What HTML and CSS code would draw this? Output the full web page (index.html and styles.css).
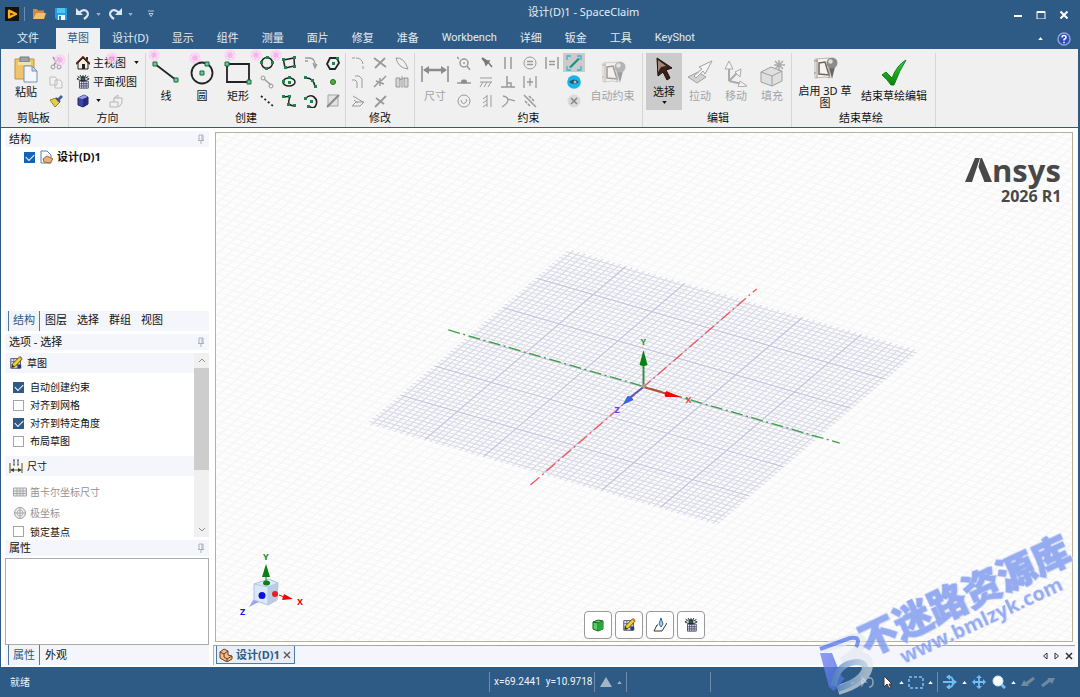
FILE: index.html
```html
<!DOCTYPE html>
<html lang="zh-CN">
<head>
<meta charset="utf-8">
<title>设计(D)1 - SpaceClaim</title>
<link rel="stylesheet" href="styles.css">
</head>
<body>
<svg class="defs" aria-hidden="true">
  <defs>
    <symbol id="down" viewBox="0 0 6 4"><path d="M0 0h6L3 4z" fill="currentColor"/></symbol>
    <symbol id="up" viewBox="0 0 6 4"><path d="M0 4h6L3 0z" fill="currentColor"/></symbol>
    <symbol id="pin" viewBox="0 0 8 10"><path d="M2 1h4v5M2 1v5M5 1v5M1 6.500h6M4 6.500V10" fill="none" stroke="#8d93a3"/></symbol>
    <symbol id="eyegrid" viewBox="0 0 16 16">
      <path d="M4 7h10v8H4z" fill="#fff" stroke="#3a3f66"/><path d="M4 10h10M4 12.500h10M6.500 7v8M9 7v8M11.500 7v8" stroke="#3a3f66"/>
      <path d="M1 4.500Q7.500-1 15 4.500Q8 9 1 4.500z" fill="#dfe9ea" stroke="#222"/><circle cx="8" cy="4.500" r="2.300" fill="#27666b" stroke="#111"/>
      <path d="M2 1l1 1.500M5 0v1.500M8 0v1M11 0v1.500M14 1l-1 1.500" stroke="#222"/>
    </symbol>
    <symbol id="sketch" viewBox="0 0 16 16">
      <path d="M2 3h11v11H2z" fill="#e9ebf4" stroke="#3e4366"/><path d="M2 6.500h11M2 10h11M5.500 3v11M9.500 3v11" stroke="#59608b"/><path d="M10 10h4v4h-4z" fill="#30386f"/>
      <path d="M3 13l1.500-4.500L12 1l3 2.500-7.500 8z" fill="#f3d322" stroke="#54440a"/><path d="M3 13l1-3 2 2z" fill="#222"/><path d="M11.500 1.500L14 4l1.500-1.500L13 0z" fill="#cf6f55"/>
    </symbol>
    <symbol id="spark" viewBox="0 0 12 12"><circle cx="6" cy="6" r="5.500" fill="#fcc4f2" opacity=".75"/><path d="M3 6h6M6 3v6M4 4l4 4M8 4L4 8" stroke="#f18bdc" opacity=".45"/><circle cx="6" cy="6" r="4" fill="none" stroke="#fff" stroke-dasharray="2 2" opacity=".8"/></symbol>
    <symbol id="plane3d" viewBox="0 0 28 28">
      <path d="M4 4l15-1v20l-5-1-10 1z" fill="#f5f3f0" stroke="#bdb7b3"/><path d="M8 8l6-1 4 13-10-1z" fill="none" stroke="#6d625c" stroke-width="1.500"/><path d="M3 6h4M5 18h-2M6 4v19M18 7v16" stroke="#9a8f88"/>
      <path d="M18 12l6 0-3 12z" fill="#666"/><circle cx="21" cy="8" r="5.500" fill="#8c8c8c"/><circle cx="19.500" cy="6.500" r="2.200" fill="#dedede"/>
    </symbol>
    <linearGradient id="tick" x1="0" y1="0" x2="0" y2="1"><stop offset="0" stop-color="#3bd53c"/><stop offset="1" stop-color="#07800c"/></linearGradient>
    <linearGradient id="stem" x1="0" y1="0" x2="1" y2="1"><stop offset="0" stop-color="#7c86f6"/><stop offset="1" stop-color="#3d6fd6"/></linearGradient>
    <linearGradient id="bowl" x1="0" y1="0" x2="1" y2="0"><stop offset="0" stop-color="#5f8ed0"/><stop offset="1" stop-color="#b9c9d8"/></linearGradient>
  </defs>
</svg>

<div class="window">
  <header class="titlebar">
    <div class="quick">
      <svg class="i14" viewBox="0 0 14 14"><path d="M0 0h14v14H0z" fill="#15120c"/><path d="M4 3.500l7 3.500-7 3.500z" fill="#4a2f05" stroke="#ffb21b" stroke-width="2.200" stroke-linejoin="round"/></svg>
      <span class="vline"></span>
      <button aria-label="打开"><svg class="i14" viewBox="0 0 14 14"><path d="M1 2h4l1 1.500h6V6H4l-3 6z" fill="#d7893b"/><path d="M4 6h10l-2 6H1z" fill="#f6bd6f"/></svg></button>
      <button aria-label="保存"><svg class="i14" viewBox="0 0 14 14"><path d="M1 1h12v12H3l-2-2z" fill="#1e9fe0"/><path d="M3 1h8v5H3z" fill="#53c4f2"/><path d="M4 8h7v5H4z" fill="#eef8fd"/><path d="M5 9h2v4H5z" fill="#2b7db4"/></svg></button>
      <button aria-label="撤销"><svg class="i16" viewBox="0 0 16 16"><path d="M4 7Q9 2 12 5.500T9 13" fill="none" stroke="#dce6ef" stroke-width="2.200"/><path d="M1 2v7h7z" fill="#dce6ef"/></svg></button>
      <svg class="tri dim"><use href="#down"/></svg>
      <button aria-label="重做"><svg class="i16" viewBox="0 0 16 16"><path d="M12 7Q7 2 4 5.500T7 13" fill="none" stroke="#dce6ef" stroke-width="2.200"/><path d="M15 2v7H8z" fill="#dce6ef"/></svg></button>
      <svg class="tri dim"><use href="#down"/></svg>
      <button class="more" aria-label="自定义"><svg class="i8" viewBox="0 0 8 8"><path d="M1 1h6M2 3.500h4L4 6.500z" fill="none" stroke="#b9cad9"/></svg></button>
    </div>
    <h1>设计(D)1 - SpaceClaim</h1>
    <div class="winctl">
      <button aria-label="最小化"><svg class="i10" viewBox="0 0 10 10"><path d="M1 7h8" stroke="#fff" stroke-width="2"/></svg></button>
      <button aria-label="最大化"><svg class="i10" viewBox="0 0 10 10"><path d="M1 2.500h8V10H1z" fill="none" stroke="#fff"/><path d="M1 3h8" stroke="#fff" stroke-width="2"/></svg></button>
      <button aria-label="关闭"><svg class="i10" viewBox="0 0 10 10"><path d="M1.500 2.500l7 7M8.500 2.500l-7 7" stroke="#fff" stroke-width="2"/></svg></button>
    </div>
  </header>

  <nav class="menu">
    <button class="file">文件</button><button class="active">草图</button><button>设计(D)</button><button>显示</button><button>组件</button><button>测量</button><button>面片</button><button>修复</button><button>准备</button><button class="latin">Workbench</button><button>详细</button><button>钣金</button><button>工具</button><button class="latin">KeyShot</button>
    <div class="menu-end">
      <svg class="tri light"><use href="#up"/></svg>
      <svg class="i14" viewBox="0 0 14 14"><circle cx="7" cy="7" r="6" fill="#2c49b8" stroke="#8fa3dc" stroke-width="1.500"/><path d="M5 5.500Q5 3.500 7 3.500T9 5.500Q9 6.500 7 7.500V8.500M7 9.700v1.500" fill="none" stroke="#fff" stroke-width="1.500"/></svg>
    </div>
  </nav>

  <section class="ribbon">
    <svg class="sparks" viewBox="0 0 300 20" aria-hidden="true">
      <use href="#spark" x="53" y="5" width="12" height="12"/><use href="#spark" x="105" y="3" width="12" height="12"/><use href="#spark" x="147" y="0" width="12" height="12"/><use href="#spark" x="188" y="3" width="12" height="12"/><use href="#spark" x="223" y="0" width="12" height="12"/><use href="#spark" x="249" y="0" width="12" height="12"/><use href="#spark" x="268" y="0" width="14" height="12"/>
    </svg>

    <div class="group g-clip">
      <div class="body">
        <button class="big high"><svg class="i28" viewBox="0 0 28 28"><path d="M3 4h19v20H3z" fill="#edc56c" stroke="#c39337"/><path d="M8 2h9v5H8z" fill="#9aa4ad" stroke="#717b84"/><path d="M6 7h13v3H6z" fill="#f6e1ac"/><path d="M12 11h8l5 5v11H12z" fill="#f3f7fd" stroke="#7c8fae"/><path d="M20 11v5h5z" fill="#cbd8eb" stroke="#7c8fae"/></svg>粘贴</button>
        <div class="tools one">
          <button aria-label="剪切"><svg class="i14" viewBox="0 0 14 14"><path d="M4 1l5 8M10 1L5 9" stroke="#999" stroke-width="1.500"/><circle cx="4" cy="11" r="2" fill="none" stroke="#999"/><circle cx="10" cy="11" r="2" fill="none" stroke="#999"/></svg></button>
          <button aria-label="复制"><svg class="i14" viewBox="0 0 14 14"><path d="M1 2h5l2 2v6H1zM6 5h5l2 2v6H6z" fill="#f2f2f2" stroke="#bdbdbd"/></svg></button>
          <button aria-label="格式刷"><svg class="i14" viewBox="0 0 14 14"><path d="M8 5l4-4 2 2-4 4z" fill="#4d5aa8"/><path d="M1 6l6-2 4 4-5 5z" fill="#e8ce46" stroke="#9a851f"/><path d="M7 4l4 4" stroke="#475082" stroke-width="2"/></svg></button>
        </div>
      </div>
      <h2>剪贴板</h2>
    </div>

    <div class="group g-view">
      <div class="body rows">
        <button><svg class="i14" viewBox="0 0 14 14"><path d="M2 7l5-5 5 5v6H2z" fill="#f5efdc" stroke="#222"/><path d="M0 8l7-7 7 7" fill="none" stroke="#4a2113" stroke-width="1.800"/><path d="M6 8h3v5H6z" fill="#222"/><path d="M10 1h2v3h-2z" fill="#333"/></svg>主视图<svg class="tri push"><use href="#down"/></svg></button>
        <button><svg class="i14"><use href="#eyegrid"/></svg>平面视图</button>
        <div class="row">
          <button aria-label="定向"><svg class="i14" viewBox="0 0 14 14"><path d="M2 4l6-3 4 2v7l-5 3-5-2z" fill="#3c45a5" stroke="#24286b"/><path d="M2 4l6-3 4 2-5 2z" fill="#98a0e2"/><path d="M7 5l5-2v7l-5 3z" fill="#262d7b"/></svg><svg class="tri"><use href="#down"/></svg></button>
          <button aria-label="旋转视图"><svg class="i14" viewBox="0 0 14 14"><path d="M1 8h8v5H1zM5 8V4l4-3v3h4v5l-3 4M5 4h4" fill="none" stroke="#b5b5b5"/></svg></button>
        </div>
      </div>
      <h2>方向</h2>
    </div>

    <div class="group g-create">
      <div class="body">
        <button class="big"><svg class="i28" viewBox="0 0 28 28"><path d="M3 5l21 16" stroke="#222" stroke-width="1.800"/><g fill="#74c69b" stroke="#176b3d"><path d="M1 3h4v4H1zM22 19h4v4h-4z"/></g></svg>线</button>
        <button class="big"><svg class="i28" viewBox="0 0 28 28"><circle cx="14" cy="14" r="10.500" fill="none" stroke="#222" stroke-width="1.800"/><g fill="#74c69b" stroke="#176b3d"><path d="M12 12h4v4h-4zM17 3h4v4h-4z"/></g></svg>圆</button>
        <button class="big"><svg class="i28" viewBox="0 0 28 28"><path d="M3 5h22v18H3z" fill="none" stroke="#222" stroke-width="1.800"/><g fill="#74c69b" stroke="#176b3d"><path d="M1 3h4v4H1zM23 21h4v4h-4z"/></g></svg>矩形</button>
        <div class="tools four">
          <button aria-label="三点圆"><svg class="i14" viewBox="0 0 14 14"><circle cx="7" cy="7" r="5.500" fill="none" stroke="#222" stroke-width="1.500"/><g fill="#21824c"><path d="M6 0h3v3H6zM0 5h3v3H0zM11 5h3v3h-3zM5 11h3v3H5z"/></g></svg></button>
          <button aria-label="三点矩形"><svg class="i14" viewBox="0 0 14 14"><path d="M1.500 4L12 2l.5 8L3 12z" fill="none" stroke="#222" stroke-width="1.500"/><g fill="#21824c"><path d="M0 2h3v3H0zM11 0h3v3h-3zM2 10h3v3H2zM11 9h3v3h-3z"/></g></svg></button>
          <button aria-label="切线弧"><svg class="i14" viewBox="0 0 14 14"><path d="M1 2h4Q12 2 11 12M1 5h3M9 7l2 5 2-4" fill="none" stroke="#9a9a9a" stroke-width="1.300"/></svg></button>
          <button aria-label="多边形"><svg class="i14" viewBox="0 0 14 14"><path d="M4 2h7l2 5-4 6H4L1 8z" fill="none" stroke="#222" stroke-width="1.800"/><path d="M6 6h3v3H6zM10 1h3v3h-3z" fill="#21824c"/></svg></button>
          <button aria-label="切线"><svg class="i14" viewBox="0 0 14 14"><path d="M4 4l7 6" stroke="#999" stroke-width="1.500"/><circle cx="3" cy="3" r="2" fill="none" stroke="#999"/><circle cx="11" cy="11" r="2" fill="none" stroke="#999"/></svg></button>
          <button aria-label="椭圆"><svg class="i14" viewBox="0 0 14 14"><ellipse cx="7" cy="7" rx="6" ry="4" fill="none" stroke="#222" stroke-width="1.500"/><path d="M6 6h3v3H6zM6 1h3v3H6zM0 5h3v3H0z" fill="#21824c"/></svg></button>
          <button aria-label="圆弧"><svg class="i14" viewBox="0 0 14 14"><path d="M2 3q8 0 9 9" fill="none" stroke="#222" stroke-width="1.500"/><path d="M0 1h3v3H0zM7 4h3v3H7zM10 10h3v3h-3z" fill="#21824c"/></svg></button>
          <button aria-label="点"><svg class="i14" viewBox="0 0 14 14"><circle cx="7" cy="7" r="2.500" fill="#58ab45" stroke="#236b25"/></svg></button>
          <button aria-label="构造线"><svg class="i14" viewBox="0 0 14 14"><path d="M1 2l12 10" stroke="#222" stroke-width="1.800" stroke-dasharray="2 2.500"/></svg></button>
          <button aria-label="样条曲线"><svg class="i14" viewBox="0 0 14 14"><path d="M2 3Q9 1 7 6T12 12" fill="none" stroke="#222" stroke-width="1.500"/><path d="M0 1h3v3H0zM6 1h3v3H6zM5 9h3v3H5zM11 10h3v3h-3z" fill="#21824c"/></svg></button>
          <button aria-label="扫掠弧"><svg class="i14" viewBox="0 0 14 14"><path d="M2 4q4-4 8-1t2 8-7 1" fill="none" stroke="#222" stroke-width="1.600"/><path d="M0 3h3v3H0zM6 6h3v3H6zM3 11h3v3H3z" fill="#21824c"/></svg></button>
          <button aria-label="面曲线"><svg class="i14" viewBox="0 0 14 14"><path d="M2 1h10v11H2z" fill="#e2e2e2" stroke="#a5a5a5"/><path d="M1 13L13 1" stroke="#8a8a8a" stroke-width="2"/></svg></button>
        </div>
      </div>
      <h2>创建</h2>
    </div>

    <div class="group g-modify">
      <div class="body">
        <div class="tools three gray">
          <button aria-label="圆角"><svg class="i14" viewBox="0 0 14 14"><path d="M1 2h3M5 2q6 0 7 6M12 10v3" fill="none"/></svg></button>
          <button aria-label="剪掉"><svg class="i14" viewBox="0 0 14 14"><path d="M1 2l12 9M12 2L2 12" fill="none" stroke-width="1.800"/></svg></button>
          <button aria-label="偏移圆弧"><svg class="i14" viewBox="0 0 14 14"><path d="M1 2q8-1 12 11Q3 12 1 2z" fill="none"/></svg></button>
          <button aria-label="偏移"><svg class="i14" viewBox="0 0 14 14"><path d="M1 5h3l2 2v6M4 1h4l3 3v9" fill="none"/></svg></button>
          <button aria-label="分割"><svg class="i14" viewBox="0 0 14 14"><path d="M1 12l5-5M8 6l5-5M3 6l8 3M7 3v8" fill="none" stroke-width="1.500"/></svg></button>
          <button aria-label="镜像"><svg class="i14" viewBox="0 0 14 14"><path d="M1 3h4v9H1zM9 3h4v9H9zM7 1v12M4 5l6-2" fill="#d5d5d5"/></svg></button>
          <button aria-label="投影"><svg class="i14" viewBox="0 0 14 14"><path d="M2 2l10 6M1 12h8l4-4H5zM3 6l4 3" fill="none"/></svg></button>
          <button aria-label="延伸"><svg class="i14" viewBox="0 0 14 14"><path d="M2 13L13 2M3 4l8 6" fill="none" stroke-width="1.800"/></svg></button>
        </div>
      </div>
      <h2>修改</h2>
    </div>

    <div class="group g-constrain">
      <div class="body">
        <button class="big off"><svg class="i28" viewBox="0 0 28 28"><path d="M1 7v16M27 7v16" stroke="#8b8b8b" stroke-width="1.500"/><path d="M4 11h20" stroke="#8b8b8b" stroke-width="2.500"/><path d="M2 11l6-4v8zM26 11l-6-4v8z" fill="#8b8b8b"/></svg>尺寸</button>
        <div class="tools five gray">
          <button aria-label="检查"><svg class="i14" viewBox="0 0 14 14"><circle cx="7" cy="7" r="4" fill="none" stroke-width="1.500"/><path d="M10 10l3 4M6 7h2M0 1l2 2" stroke-width="1.500"/></svg></button>
          <button aria-label="固定"><svg class="i14" viewBox="0 0 14 14"><path d="M3 2l5 3 2 0-3 4-1-3z" fill="#777" stroke="#777" stroke-width="1.500"/><path d="M9 6l4 5" stroke="#777" stroke-width="1.500"/></svg></button>
          <button aria-label="平行"><svg class="i14" viewBox="0 0 14 14"><path d="M4 1v12M10 1v12" stroke-width="1.500"/></svg></button>
          <button aria-label="等半径"><svg class="i14" viewBox="0 0 14 14"><circle cx="7" cy="7" r="6" fill="none"/><path d="M4 5.500h6M4 8.500h6" stroke-width="1.500"/></svg></button>
          <button aria-label="等距"><svg class="i14" viewBox="0 0 14 14"><path d="M1 1v12M13 1v12M4 5.500h6M4 8.500h6" stroke-width="1.500"/></svg></button>
          <button aria-label="重合"><svg class="i14" viewBox="0 0 14 14"><path d="M0 8h14" stroke-width="1.500"/><path d="M4 8l1-3h4l1 3z" fill="#888"/></svg></button>
          <button aria-label="水平"><svg class="i14" viewBox="0 0 14 14"><path d="M1 3h12M1 7h12M4 7l-3 5M8 7l-3 5M12 7l-3 5" fill="none"/></svg></button>
          <button aria-label="垂直"><svg class="i14" viewBox="0 0 14 14"><path d="M6 1v11M0 12h14M6 8h4v4" fill="none" stroke-width="1.500"/></svg></button>
          <button aria-label="中点"><svg class="i14" viewBox="0 0 14 14"><path d="M1 1v12M13 1v12M7 3v8M4 7h6" stroke-width="1.300"/></svg></button>
          <span></span>
          <button aria-label="同心"><svg class="i14" viewBox="0 0 14 14"><circle cx="7" cy="7" r="6" fill="none"/><path d="M4 6q1 5 4 3t1-4" fill="none"/></svg></button>
          <button aria-label="竖直"><svg class="i14" viewBox="0 0 14 14"><path d="M8 1v12M12 1v12M8 2L4 5M8 6L4 9M8 10l-4 3" fill="none"/></svg></button>
          <button aria-label="相切"><svg class="i14" viewBox="0 0 14 14"><path d="M2 2q5 1 5 4t-6 7M7 5l7 2" fill="none" stroke-width="1.300"/></svg></button>
          <button aria-label="对称"><svg class="i14" viewBox="0 0 14 14"><path d="M1 1l12 12" stroke-width="1.500"/><path d="M6 2l5 5M2 7l5 5" stroke-width="1.500" stroke-dasharray="3 1"/></svg></button>
        </div>
        <div class="tools one wide">
          <button class="pressed" aria-label="显示约束"><svg class="i16" viewBox="0 0 16 16"><path d="M1 5V1h4M11 1h4v4M15 11v4h-4M5 15H1v-4" fill="none" stroke="#30b9d4" stroke-width="1.300"/><path d="M3 12l9-9 2 1-9 9z" fill="#168f84"/></svg></button>
          <button aria-label="约束可见性"><svg class="i14" viewBox="0 0 14 14"><circle cx="7" cy="7" r="6.800" fill="#16b3ee"/><path d="M2 7q5-5 10 0-5 4-10 0z" fill="#31505e"/><circle cx="8" cy="7" r="1.500" fill="#9fc2d0"/></svg></button>
          <button aria-label="删除约束"><svg class="i14" viewBox="0 0 14 14"><circle cx="7" cy="7" r="6.500" fill="#dadada"/><path d="M4 4l6 6M10 4l-6 6" stroke="#858585" stroke-width="1.500"/></svg></button>
        </div>
        <button class="big off auto"><svg class="i28"><use href="#plane3d" opacity=".6"/></svg>自动约束</button>
      </div>
      <h2>约束</h2>
    </div>

    <div class="group g-edit">
      <div class="body">
        <button class="big high pressed"><svg class="i28" viewBox="0 0 28 28"><path d="M7 3l15 10-6 2 4 8-3 2-4-8-5 4z" fill="#3c2117" stroke="#1b100b"/><path d="M8 5l8 6-5 1-3 5z" fill="#a3887a"/></svg>选择<svg class="tri"><use href="#down"/></svg></button>
        <button class="big off"><svg class="i28" viewBox="0 0 28 28"><path d="M2 18l10-5 8 5-9 6z" fill="#d2d2d2" stroke="#a3a3a3"/><path d="M8 17l8-7-3-2L26 2l-7 13-2-3-7 7z" fill="#f5f5f5" stroke="#a3a3a3"/></svg>拉动</button>
        <button class="big off"><svg class="i28" viewBox="0 0 28 28"><path d="M7 22V8M7 22l9-9M7 22l13 3" stroke="#ababab" stroke-width="2"/><path d="M7 2l4 8H3zM19 10l-1 8-5-5zM25 27l-9 1 2-6z" fill="#f5f5f5" stroke="#ababab"/></svg>移动</button>
        <button class="big off"><svg class="i28" viewBox="0 0 28 28"><path d="M3 13l10-5 11 4v10l-10 5-11-4z" fill="#dfdfdf" stroke="#9f9f9f"/><path d="M3 13l11 4 10-5M14 17v10" fill="none" stroke="#9f9f9f"/><path d="M21 1v11M16 6h11M17 2l8 8M25 2l-8 8" stroke="#aaa" stroke-width="1.500"/></svg>填充</button>
      </div>
      <h2>编辑</h2>
    </div>

    <div class="group g-end">
      <div class="body">
        <button class="big high wide3d"><svg class="i28"><use href="#plane3d"/></svg>启用 3D 草图</button>
        <button class="big finish"><svg class="i28" viewBox="0 0 28 28"><path d="M2 16l4-3 6 6Q17 6 26 1 19 12 14 26h-3Q7 20 2 16z" fill="url(#tick)" stroke="#138017"/></svg>结束草绘编辑</button>
      </div>
      <h2>结束草绘</h2>
    </div>
  </section>

  <main class="workspace">
    <aside class="side">
      <section class="tree">
        <h3>结构<svg class="pin"><use href="#pin"/></svg></h3>
        <label class="node"><input type="checkbox" class="bright" checked>
          <svg class="i14" viewBox="0 0 14 14"><path d="M2 1h6l4 4v8H2z" fill="#fafcff" stroke="#5f7fa6"/><path d="M4 9l4-3 6 3-3 4-6-1z" fill="#e9b07c" stroke="#a5673a"/></svg>
          <b>设计(D)1</b></label>
      </section>
      <div class="tabs upper"><button class="on">结构</button><button>图层</button><button>选择</button><button>群组</button><button>视图</button></div>

      <section class="options">
        <h3>选项 - 选择<svg class="pin"><use href="#pin"/></svg></h3>
        <div class="scroller">
          <div class="list">
            <h4><svg class="i14"><use href="#sketch"/></svg>草图</h4>
            <div class="checks">
              <label><input type="checkbox" checked>自动创建约束</label>
              <label><input type="checkbox">对齐到网格</label>
              <label><input type="checkbox" checked>对齐到特定角度</label>
              <label><input type="checkbox">布局草图</label>
            </div>
            <h4><svg class="i14" viewBox="0 0 14 14"><path d="M1 4v10M13 4v10" stroke="#7b7c32" stroke-width="1.300"/><path d="M2 11h10" stroke="#5c5d20"/><path d="M1 11l4-2v4zM13 11L9 9v4z" fill="#3e4014"/><path d="M4 1h2M4 6h2M5 1v5M8 1h2M8 6h2M9 1v5" stroke="#555"/></svg>尺寸</h4>
            <div class="dims">
              <button disabled><svg class="i14" viewBox="0 0 14 14"><path d="M.5 3h13v8H.5zM.5 6h13M.5 8.500h13M4 3v8M7 3v8M10 3v8" fill="#e8e8e8" stroke="#a8a8a8"/></svg>笛卡尔坐标尺寸</button>
              <button disabled><svg class="i14" viewBox="0 0 14 14"><circle cx="7" cy="7" r="5.500" fill="#eee" stroke="#a0a0a0"/><circle cx="7" cy="7" r="3" fill="none" stroke="#b8b8b8"/><path d="M1 7h12M7 1v12" stroke="#a8a8a8"/></svg>极坐标</button>
              <label><input type="checkbox">锁定基点</label>
            </div>
          </div>
          <div class="scrollbar">
            <svg class="i10" viewBox="0 0 10 10"><path d="M2 7l3-3 3 3" fill="none" stroke="#8d8d8d"/></svg>
            <span class="thumb"></span>
            <svg class="i10" viewBox="0 0 10 10"><path d="M2 3l3 3 3-3" fill="none" stroke="#8d8d8d"/></svg>
          </div>
        </div>
      </section>

      <section class="props">
        <h3>属性<svg class="pin"><use href="#pin"/></svg></h3>
        <div class="propbox"></div>
      </section>
      <div class="tabs"><button class="on">属性</button><button>外观</button></div>
    </aside>

    <div class="document">
      <div class="viewport">
        <svg class="scene" viewBox="217 134 855 508" preserveAspectRatio="xMidYMid slice">
          <rect x="0" y="0" width="1300" height="900" fill="#fdfdfd"/>
          <g transform="matrix(5.880 1.700 -3.390 2.920 643.500 388)">
            <g stroke="#f6f6f7" stroke-width="400">
              <path d="M-200 0H200" stroke-dasharray=".3 1.200"/>
              <path d="M0-200V200" stroke-dasharray=".3 1.200"/>
            </g>
            <g stroke="#dadae8" stroke-width="59.600">
              <path d="M-29.100 0H29.200" stroke-dasharray=".22 .78"/>
              <path d="M0-29.100V29.200" stroke-dasharray=".28 .72"/>
            </g>
            <g stroke="#c3c3e2" stroke-width="59">
              <path d="M-20.100 0H21" stroke-dasharray=".2 9.800"/>
              <path d="M0-20.100V21" stroke-dasharray=".25 9.750"/>
            </g>
          </g>
          <g fill="none" stroke-width="1.300" stroke-dasharray="12 3.500 2 3.500">
            <path d="M449 331L840 444" stroke="#3d9f42"/><path d="M531 486L757 290" stroke="#f35b5b"/>
          </g>
          <path d="M644 388V365" stroke="#3a8c4c" stroke-width="2"/><path d="M644 351l4 15q-4 2-8 0z" fill="#078111"/>
          <path d="M644 388l24 7" stroke="#b9503d" stroke-width="2"/><path d="M681 398l-15 0q-2-3 1-6z" fill="#f10505"/>
          <path d="M644 388l-14 11" stroke="#5e55b5" stroke-width="2"/><path d="M623 406l5-9q4 0 6 4z" fill="#3867dc"/>
          <circle cx="644" cy="387" r="2" fill="#b59a8f"/>
          <g class="axis"><text x="641" y="346" fill="#379143">Y</text><text x="686" y="404" fill="#df4943">X</text><text x="615" y="414" fill="#5a4be5">Z</text></g>
        </svg>

        <svg class="brand" viewBox="964 154 100 54">
          <path d="M966 183l10-24h5l-8 24zM981.500 159h1.500l10 24h-7.500l-6-15z" fill="#484848"/>
          <text class="brand-name" x="993" y="183">nsys</text>
          <text class="brand-ver" x="1002" y="203">2026 R1</text>
        </svg>

        <svg class="triad" viewBox="238 550 68 68">
          <path d="M254 584l15-5 9 4-1 17-9 5-14-5z" fill="#dce8f7" stroke="#adc3de"/><path d="M254 584l14 3 10-4M268 587v18" fill="none" stroke="#b3c9e3"/><path d="M268 587l10-4-1 17-9 5z" fill="#b8cce5"/>
          <path d="M266 582v-7" stroke="#078111"/><path d="M266 564l4 13h-8z" fill="#078111"/><ellipse cx="266.500" cy="583" rx="3.500" ry="2.500" fill="#078111"/>
          <path d="M293 599l-11 1 2-6z" fill="#f10505"/><path d="M279 595l5 2" stroke="#f10505"/><circle cx="275" cy="594" r="3" fill="#ee1b22"/>
          <circle cx="262" cy="595.500" r="3.500" fill="#0910dc"/><path d="M249 607l4-7 6 2z" fill="#9ca3f0"/>
          <g class="axis"><text x="263" y="560" fill="#0b8c18">Y</text><text x="297" y="605" fill="#f10505">X</text><text x="240" y="615" fill="#1717e8">Z</text></g>
        </svg>

        <div class="modes">
          <button aria-label="三维模式"><svg class="i14" viewBox="0 0 14 14"><path d="M2 4l5-2 5 1v8l-5 2-5-2z" fill="#55cf66" stroke="#175f22"/><path d="M2 4l5 1 5-2M7 5v8" fill="none" stroke="#175f22"/><path d="M7 5l5-2v8l-5 2z" fill="#2ca43f"/></svg></button>
          <button aria-label="草图模式"><svg class="i14"><use href="#sketch"/></svg></button>
          <button aria-label="剖面模式"><svg class="i14" viewBox="0 0 14 14"><path d="M5 7H4L1 13h8l5-8" fill="none" stroke="#333"/><path d="M8 0l2 6-2 3-2-3z" fill="#9dccef" stroke="#316a9b"/></svg></button>
          <button aria-label="平面视图"><svg class="i14"><use href="#eyegrid"/></svg></button>
        </div>
      </div>

      <div class="docbar">
        <button class="doctab"><svg class="i14" viewBox="0 0 14 14"><path d="M1 4l4-3 4 2v4l4 1v3l-5 3-7-4z" fill="#edbd90" stroke="#6d3d1e"/><path d="M1 4l4 2 4-3M5 6v3l3 2 5-3M8 11v3" fill="none" stroke="#6d3d1e"/></svg><b>设计(D)1</b><svg class="i8" viewBox="0 0 8 8"><path d="M1 1l6 6M7 1L1 7" stroke="#555" stroke-width="1.300"/></svg></button>
        <div class="docnav">
          <button aria-label="上一个"><svg class="i8" viewBox="0 0 8 8"><path d="M6 1v6L2.500 4z" fill="none" stroke="#333"/></svg></button>
          <button aria-label="下一个"><svg class="i8" viewBox="0 0 8 8"><path d="M2 1v6l3.500-3z" fill="none" stroke="#333"/></svg></button>
          <button aria-label="关闭"><svg class="i8" viewBox="0 0 8 8"><path d="M1 1l6 6M7 1L1 7" stroke="#333" stroke-width="1.500"/></svg></button>
        </div>
      </div>
    </div>
  </main>

  <footer class="status">
    <span class="ready">就绪</span>
    <span class="coords"><span>x=69.2441</span><span>y=10.9718</span></span>
    <span class="warn"><svg class="i14" viewBox="0 0 14 14"><path d="M7 2l6 10H1z" fill="#a7b4c4"/></svg><svg class="tri dim"><use href="#up"/></svg></span>
    <span class="blank"></span>
    <div class="viewtools">
      <svg class="tri dim"><use href="#up"/></svg>
      <button aria-label="恢复"><svg class="i14" viewBox="0 0 14 14"><path d="M2 2l4 5H4l-2 3zM8 3q5-1 5 4t-4 5" fill="none" stroke="#8fa5b8" stroke-width="1.500"/></svg></button>
      <button aria-label="选择"><svg class="i14" viewBox="0 0 14 14"><path d="M4 1l8 8-3 0 2 4-2 0-2-4-3 3z" fill="#fff" stroke="#40372f"/></svg></button>
      <svg class="tri light"><use href="#up"/></svg>
      <button aria-label="框选"><svg class="i16" viewBox="0 0 16 16"><path d="M1 3h14v11H1z" fill="none" stroke="#7cc3f8" stroke-width="1.500" stroke-dasharray="3 2"/></svg></button>
      <svg class="tri light"><use href="#up"/></svg>
      <span class="vline tall"></span>
      <button aria-label="旋转"><svg class="i14" viewBox="0 0 14 14"><path d="M0 7h12M5 2q5-1 5 5t-5 5" fill="none" stroke="#70bdf7" stroke-width="1.800"/><path d="M14 7l-4-3v6zM3 2l4-3v6zM3 12l4-3v6z" fill="#70bdf7"/></svg></button>
      <svg class="tri light"><use href="#up"/></svg>
      <button aria-label="平移"><svg class="i14" viewBox="0 0 14 14"><path d="M1 7h12M7 1v12" stroke="#70bdf7" stroke-width="1.800"/><path d="M7 0l3 3H4zM7 14l3-3H4zM0 7l3-3v6zM14 7l-3-3v6z" fill="#70bdf7"/></svg></button>
      <button aria-label="缩放"><svg class="i14" viewBox="0 0 14 14"><path d="M9 9l4 4" stroke="#70bdf7" stroke-width="3"/><circle cx="6" cy="6" r="5" fill="#fff" stroke="#c9e8ff"/></svg></button>
      <svg class="tri light"><use href="#up"/></svg>
      <button aria-label="上一视图"><svg class="i14" viewBox="0 0 14 14"><path d="M13 3L5 9" stroke="#71899f" stroke-width="3"/><path d="M0 11l3-6 5 6z" fill="#71899f"/></svg></button>
      <button aria-label="下一视图"><svg class="i14" viewBox="0 0 14 14"><path d="M1 11l8-6" stroke="#71899f" stroke-width="3"/><path d="M14 3l-3 6-5-6z" fill="#71899f"/></svg></button>
    </div>
  </footer>

  <svg class="watermark" viewBox="815 530 265 167">
    <g fill="none" stroke="#e4e8ef" stroke-width="10" opacity=".8"><path d="M822 649L850 639Q864 635 860 646Q854 656 842 662Q868 650 868 666Q866 682 838 690"/></g>
    <path d="M820 653h12l6 15q3 10 7 10l-11 13-5-4z" fill="url(#stem)"/>
    <path d="M820 649L850 638Q862 636 856 647" fill="none" stroke="#5c7cf0" stroke-width="4"/>
    <path d="M834 686Q836 664 856 662Q868 662 864 672Q858 682 838 689" fill="none" stroke="url(#bowl)" stroke-width="6"/>
    <text class="wm-name" transform="translate(867 656) rotate(-25)">不迷路资源库</text>
    <text class="wm-url" transform="translate(904 664) rotate(-25)">www.bmlzyk.com</text>
  </svg>
</div>
</body>
</html>
```

FILE: styles.css
```css
* { box-sizing: border-box; }
html, body { height: 100%; margin: 0; }
body {
  font: 11px/14px "Noto Sans", "Noto Sans CJK SC", sans-serif;
  color: #111;
}
button {
  display: flex;
  align-items: center;
  justify-content: center;
  margin: 0;
  padding: 0;
  border: 0;
  background: none;
  color: inherit;
  font: inherit;
}
h1, h2, h3, h4 { margin: 0; font: inherit; }
svg { display: block; flex: none; }
.defs { position: absolute; width: 0; height: 0; }
.i8 { width: 8px; height: 8px; }
.i10 { width: 10px; height: 10px; }
.i14 { width: 14px; height: 14px; }
.i16 { width: 16px; height: 16px; }
.i28 { width: 28px; height: 28px; }
.tri { width: 5px; height: 3px; }
.dim { color: #9fb2c4; }
.light { color: #fff; }
.vline { width: 1px; height: 14px; background: #6f8dab; }
.vline.tall { height: 20px; }

.window {
  position: relative;
  display: flex;
  flex-direction: column;
  height: 100vh;
  padding: 0 2px 0 1px;
  overflow: hidden;
  background: #2d5b85;
}

.titlebar {
  display: grid;
  grid-template-columns: 1fr auto 1fr;
  align-items: center;
  height: 28px;
  color: #e6edf4;
}
.quick { display: flex; align-items: center; gap: 5px; padding-left: 4px; }
.quick button { width: 17px; }
.quick .more { margin-left: 4px; }
.titlebar h1 { padding: 0 0 4px 88px; }
.winctl { display: flex; justify-content: flex-end; gap: 13px; padding-right: 9px; }

.menu { display: flex; gap: 1px; height: 21px; color: #e3ebf2; }
.menu button { padding: 0 11px 2px; }
.menu .file { padding: 0 16px 2px; }
.menu .latin { font-family: Roboto, sans-serif; }
.menu .active { background: #f0f0f0; color: #2d5b85; }
.menu-end { display: flex; align-items: center; gap: 14px; margin-left: auto; padding-right: 7px; }

.ribbon {
  position: relative;
  display: flex;
  height: 78px;
  padding-top: 4px;
  background: #f0f0f0;
}
.sparks { position: absolute; top: 0; left: 0; width: 300px; height: 20px; pointer-events: none; }
.group { display: flex; flex-direction: column; border-right: 1px solid #d6d6d6; }
.group h2 { padding-top: 1px; text-align: center; }
.body { display: flex; height: 57px; }
.big {
  flex-direction: column;
  justify-content: flex-start;
  gap: 2px;
  width: 36px;
  padding-top: 6px;
}
.big.high { padding-top: 2px; }
.big.off { color: #a3a3a3; }
.pressed { background: #cbcbcb; }
.tools { display: grid; grid-auto-rows: 19px; }
.one { grid-template-columns: 15px; }
.one.wide { grid-template-columns: 22px; }
.three { grid-template-columns: repeat(3, 22px); }
.four { grid-template-columns: repeat(4, 22px); }
.five { grid-template-columns: repeat(5, 22px); }
.gray svg { stroke: #999; }
.g-clip { padding: 0 5px 0 3px; }
.g-clip .big { width: 44px; }
.g-view { width: 77px; padding: 0 6px 0 7px; }
.rows { flex-direction: column; }
.rows button, .row { display: flex; gap: 3px; height: 19px; justify-content: flex-start; }
.rows .row { gap: 8px; }
.rows .row button { gap: 6px; }
.push { margin-left: auto; }
.g-create { padding: 0 1px 0 2px; }
.g-modify { padding: 0 1px; }
.g-constrain { padding: 0 2px; }
.g-constrain .auto { width: 55px; }
.g-edit { padding: 0 1px 0 3px; }
.g-end { padding-right: 5px; }
.g-end .wide3d { width: 66px; padding: 2px 5px 0; line-height: 12px; }
.g-end .finish { width: 72px; white-space: nowrap; }

.workspace {
  display: flex;
  flex: 1;
  min-height: 0;
  margin-top: 1px;
  background: #fff;
}
.side {
  display: flex;
  flex-direction: column;
  width: 212px;
  padding: 3px 4px 2px;
}
.side h3 {
  display: flex;
  align-items: center;
  justify-content: space-between;
  height: 16px;
  padding: 0 4px;
  background: #f5f6fb;
}
.pin { width: 8px; height: 10px; opacity: .7; }
.tree { flex: 1; }
.node { display: flex; align-items: center; gap: 4px; height: 20px; padding-left: 19px; }
.tabs { display: flex; height: 20px; padding-left: 3px; background: #f5f6fb; }
.tabs button { width: 32px; }
.tabs.upper button { padding-bottom: 2px; }
.tabs .on { border: solid #4f7ba3; border-width: 0 1px; color: #2d5b85; background: #f2f4f8; }

input[type="checkbox"] {
  display: grid;
  place-items: center;
  flex: none;
  appearance: none;
  width: 11px;
  height: 11px;
  margin: 0;
  border: 1px solid #a5a5a5;
  background: #fff;
}
input[type="checkbox"]:checked { border-color: #2d5b85; background: #2d5b85; }
input[type="checkbox"]:checked::after {
  content: "";
  width: 7px;
  height: 4px;
  margin-bottom: 2px;
  border: solid #fff;
  border-width: 0 0 1px 1px;
  transform: rotate(-45deg);
}
input.bright:checked { border-color: #1264ba; background: #1264ba; }

.options { margin-top: 3px; font-size: 10px; }
.options h3 { font-size: 11px; }
.scroller { display: flex; height: 187px; margin-top: 3px; }
.list { flex: 1; }
.list h4 { display: flex; align-items: center; gap: 4px; height: 20px; padding-left: 4px; background: #f5f6fb; }
.checks { padding: 5px 0 6px; }
.list label { display: flex; align-items: center; gap: 6px; height: 18px; padding-left: 8px; }
.dims { padding-top: 5px; }
.dims button { gap: 3px; height: 21px; padding-left: 8px; color: #939393; }
.dims label { height: 17px; }
.scrollbar {
  display: flex;
  flex-direction: column;
  align-items: center;
  justify-content: space-between;
  width: 15px;
  height: 184px;
  padding: 2px 0;
  background: #f0f0f0;
}
.thumb { width: 15px; height: 102px; margin-bottom: 53px; background: #cdcdcd; }
.propbox { height: 87px; margin-top: 2px; border: 1px solid #ababab; background: #fff; }

.document { display: flex; flex: 1; flex-direction: column; min-width: 0; padding: 4px 3px 2px 0; }
.viewport {
  position: relative;
  flex: 1;
  min-height: 0;
  margin: 0 2px;
  border: 1px solid #b9b09a;
  overflow: hidden;
}
.scene { position: absolute; inset: 0; width: 100%; height: 100%; }
.axis { font: 700 9px "Noto Sans", sans-serif; }
.brand { position: absolute; top: 20px; right: 9px; width: 100px; height: 54px; overflow: visible; fill: #484848; }
.brand-name { font: 700 31px "Open Sans", sans-serif; }
.brand-ver { font: 700 16px "Open Sans", sans-serif; }
.triad { position: absolute; bottom: 23px; left: 22px; width: 68px; height: 68px; }
.modes { position: absolute; right: 0; bottom: 2px; left: 0; display: flex; justify-content: center; gap: 3px; }
.modes button { width: 28px; height: 28px; border: 1px solid #999; border-radius: 4px; background: #fff; }

.docbar {
  display: flex;
  justify-content: space-between;
  height: 20px;
  margin-top: 3px;
  padding-left: 2px;
  border-top: 1px solid #a5a5a5;
  border-left: 1px solid #b5b5b5;
  background: #f5f6fb;
}
.doctab { gap: 3px; height: 18px; padding: 0 3px 0 2px; border: 1px solid #4f7ba3; border-top: 0; color: #2d5b85; background: #e9eef6; }
.docnav { display: flex; gap: 4px; padding-right: 2px; }

.status { display: flex; align-items: center; height: 30px; color: #f0f4f8; font-size: 10px; }
.status > span { display: flex; align-items: center; height: 20px; border-right: 1px solid #6f8dab; }
.status .ready { width: 489px; padding-left: 9px; }
.status .coords { gap: 5px; width: 105px; padding-left: 4px; font-family: Roboto, sans-serif; }
.status .warn { gap: 4px; width: 32px; padding-left: 4px; }
.status .blank { width: 84px; }
.viewtools { display: flex; align-items: center; gap: 4px; margin-left: auto; padding-right: 22px; }
.viewtools button { width: 16px; }

.watermark { position: absolute; right: 0; bottom: 0; width: 265px; height: 167px; overflow: visible; opacity: .8; pointer-events: none; }
.watermark text { fill: #7c98ef; filter: drop-shadow(1px 1px 0 #e6eaf6); }
.wm-name { font: 900 38px "Noto Sans CJK SC", sans-serif; stroke: #7c98ef; stroke-width: 1px; }
.wm-url { font: 700 20px "Open Sans", sans-serif; }
```
